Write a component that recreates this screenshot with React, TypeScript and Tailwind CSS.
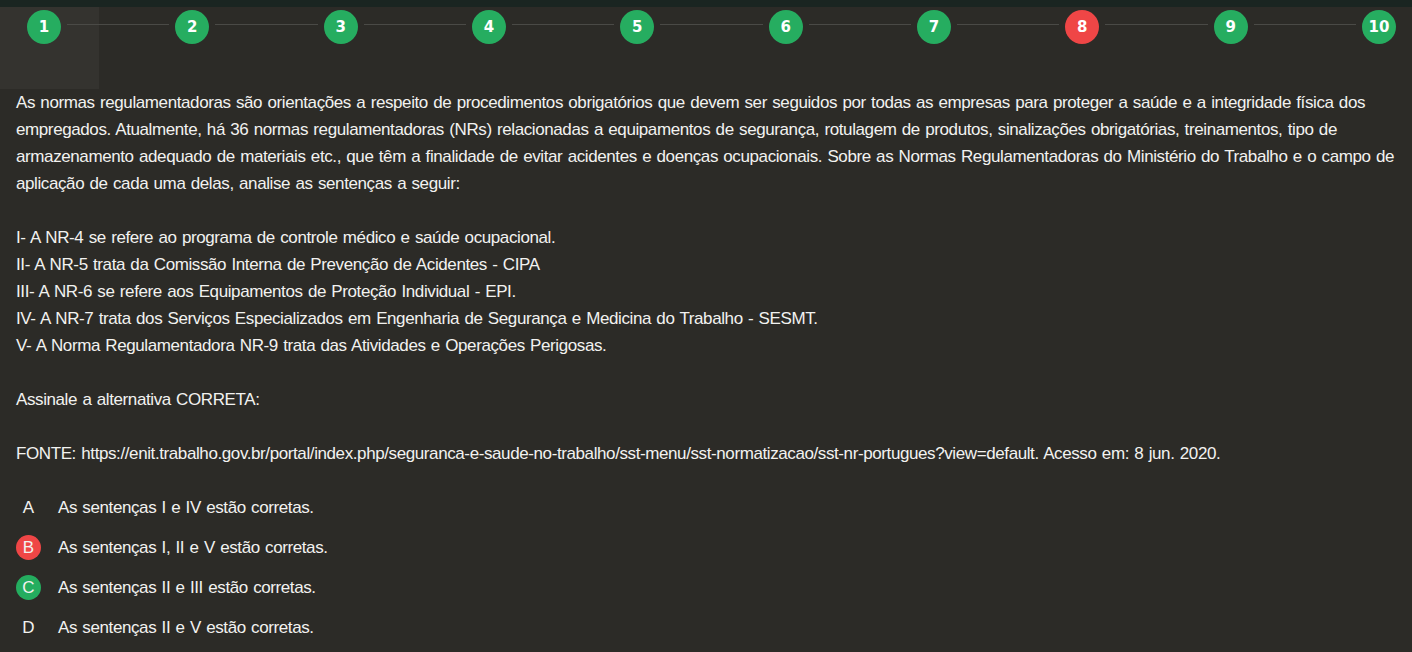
import React from 'react';

const steps = [1, 2, 3, 4, 5, 6, 7, 8, 9, 10];
const wrongStep = 8;

const paragraph = [
  'As normas regulamentadoras são orientações a respeito de procedimentos obrigatórios que devem ser seguidos por todas as empresas para proteger a saúde e a integridade física dos',
  'empregados. Atualmente, há 36 normas regulamentadoras (NRs) relacionadas a equipamentos de segurança, rotulagem de produtos, sinalizações obrigatórias, treinamentos, tipo de',
  'armazenamento adequado de materiais etc., que têm a finalidade de evitar acidentes e doenças ocupacionais. Sobre as Normas Regulamentadoras do Ministério do Trabalho e o campo de',
  'aplicação de cada uma delas, analise as sentenças a seguir:',
];

const sentences = [
  'I- A NR-4 se refere ao programa de controle médico e saúde ocupacional.',
  'II- A NR-5 trata da Comissão Interna de Prevenção de Acidentes - CIPA',
  'III- A NR-6 se refere aos Equipamentos de Proteção Individual - EPI.',
  'IV- A NR-7 trata dos Serviços Especializados em Engenharia de Segurança e Medicina do Trabalho - SESMT.',
  'V- A Norma Regulamentadora NR-9 trata das Atividades e Operações Perigosas.',
];

const options = [
  { letter: 'A', text: 'As sentenças I e IV estão corretas.', state: 'none' },
  { letter: 'B', text: 'As sentenças I, II e V estão corretas.', state: 'wrong' },
  { letter: 'C', text: 'As sentenças II e III estão corretas.', state: 'right' },
  { letter: 'D', text: 'As sentenças II e V estão corretas.', state: 'none' },
];

const StepBar: React.FC = () => (
  <div className="relative h-[82px]">
    <div className="absolute left-0 top-0 w-[99px] h-full bg-[#34332f]" />
    <div className="relative flex items-start pt-[3px] pl-[27px] pr-[16px]">
      {steps.map((n, i) => (
        <React.Fragment key={n}>
          {i > 0 && <div className="flex-1 h-px mt-[14px] mx-[6px] bg-[#4a4a46]" />}
          <div
            className={`w-[34px] h-[34px] shrink-0 rounded-full flex items-center justify-center text-white font-bold text-[15px] font-['DejaVu_Sans',sans-serif] ${n === wrongStep ? 'bg-[#ef4646]' : 'bg-[#26ad60]'}`}
          >
            {n}
          </div>
        </React.Fragment>
      ))}
    </div>
  </div>
);

export default function App() {
  return (
    <div className="w-[1412px] h-[652px] overflow-hidden bg-[#2c2b27] text-[#f2f2f0] font-['Liberation_Sans',Arial,sans-serif]">
      <div className="h-[7px] bg-[#1a2521]" />
      <StepBar />
      <div className="px-[16px] text-[17px] leading-[27px] tracking-[-0.4px] [word-spacing:1px] whitespace-nowrap">
        {paragraph.map((l) => (
          <div key={l}>{l}</div>
        ))}
        <div className="h-[27px]" />
        {sentences.map((l) => (
          <div key={l}>{l}</div>
        ))}
        <div className="h-[27px]" />
        <div>Assinale a alternativa CORRETA:</div>
        <div className="h-[27px]" />
        <div>
          FONTE: https://enit.trabalho.gov.br/portal/index.php/seguranca-e-saude-no-trabalho/sst-menu/sst-normatizacao/sst-nr-portugues?view=default. Acesso em: 8 jun. 2020.
        </div>
        <div className="mt-[20px] flex flex-col">
          {options.map((o) => (
            <div key={o.letter} className="h-[40px] flex items-center">
              <div
                className={`w-[25px] h-[25px] rounded-full flex items-center justify-center tracking-normal ${o.state === 'wrong' ? 'bg-[#ef4646]' : o.state === 'right' ? 'bg-[#24ad5f]' : ''}`}
              >
                {o.letter}
              </div>
              <div className="ml-[17px]">{o.text}</div>
            </div>
          ))}
        </div>
      </div>
    </div>
  );
}
